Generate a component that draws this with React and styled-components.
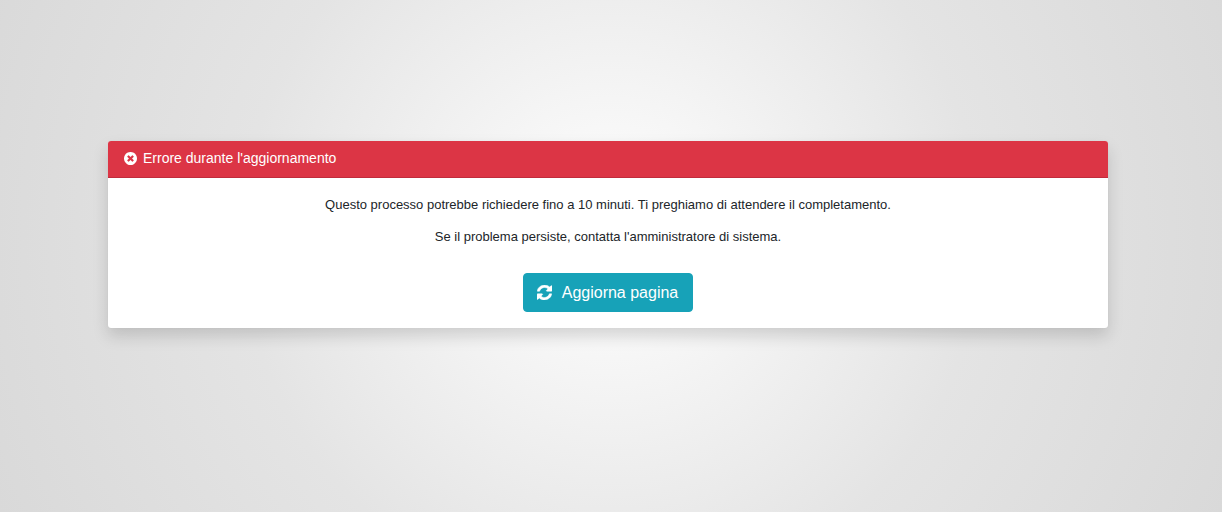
import React from "react";
import styled, { createGlobalStyle } from "styled-components";

const GlobalStyle = createGlobalStyle`
  *, *::before, *::after { box-sizing: border-box; }
  body {
    margin: 0;
    font-family: "Liberation Sans", Arial, sans-serif;
    font-size: 13px;
    line-height: 20px;
    color: #212529;
  }
`;

const Page = styled.main`
  min-height: 100vh;
  padding: 141px 114px 80px 108px;
  background: radial-gradient(circle at 50% 46%, #ffffff 0%, #e4e4e4 55%, #d9d9d9 100%);
`;

const Card = styled.section`
  max-width: 1000px;
  margin: 0 auto;
  background: #fff;
  border-radius: 3px;
  overflow: hidden;
  box-shadow: 0 8px 16px rgba(0, 0, 0, 0.15), 0 0 1px rgba(0, 0, 0, 0.1);
`;

const CardHeader = styled.header`
  display: flex;
  align-items: flex-start;
  gap: 6px;
  padding: 7px 16px 9px;
  background: #dc3545;
  border-bottom: 1px solid #c02c3c;
  color: #fff;
`;

const CardTitle = styled.h1`
  margin: 0;
  font-size: 14px;
  font-weight: 400;
  line-height: 20px;
`;

const CardBody = styled.div`
  padding: 17px 16px 16px;
  text-align: center;
`;

const Message = styled.p`
  margin: 0 0 12px;
`;

const RefreshButton = styled.button`
  display: inline-flex;
  align-items: center;
  gap: 10px;
  margin-top: 14px;
  padding: 7px 14px 7px 13px;
  border: 1px solid #17a2b8;
  border-radius: 4px;
  background: #17a2b8;
  color: #fff;
  font-family: inherit;
  font-size: 16px;
  line-height: 23px;
  cursor: pointer;
`;

const Icon = styled.svg`
  flex: none;
  width: ${(p) => p.$size}px;
  height: ${(p) => p.$size}px;
  fill: currentColor;
`;

const HeaderIcon = styled(Icon)`
  margin-top: 4px;
`;

export default function App() {
  return (
    <>
      <GlobalStyle />
      <Page>
        <Card>
          <CardHeader>
            <HeaderIcon $size={13} viewBox="128 128 1536 1536" aria-hidden="true">
              <path d="M1277 1122q0-26-19-45l-181-181 181-181q19-19 19-45 0-27-19-46l-90-90q-19-19-46-19-26 0-45 19l-181 181-181-181q-19-19-45-19-27 0-46 19l-90 90q-19 19-19 46 0 26 19 45l181 181-181 181q-19 19-19 45 0 27 19 46l90 90q19 19 46 19 26 0 45-19l181-181 181 181q19 19 45 19 27 0 46-19l90-90q19-19 19-46zm387-226q0 209-103 385.5t-279.5 279.5-385.5 103-385.5-103-279.5-279.5-103-385.5 103-385.5 279.5-279.5 385.5-103 385.5 103 279.5 279.5 103 385.5z" />
            </HeaderIcon>
            <CardTitle>Errore durante l'aggiornamento</CardTitle>
          </CardHeader>
          <CardBody>
            <Message>
              Questo processo potrebbe richiedere fino a 10 minuti. Ti preghiamo di attendere il completamento.
            </Message>
            <Message>Se il problema persiste, contatta l'amministratore di sistema.</Message>
            <RefreshButton type="button" onClick={() => window.location.reload()}>
              <Icon $size={15} viewBox="128 128 1536 1536" aria-hidden="true">
                <path
                  stroke="currentColor"
                  strokeWidth="50"
                  d="M1639 1056q0 5-1 7-64 268-268 434.5t-478 166.5q-146 0-282.5-55t-243.5-157l-129 129q-19 19-45 19t-45-19-19-45v-448q0-26 19-45t45-19h448q26 0 45 19t19 45-19 45l-137 137q71 66 161 102t187 36q134 0 250-65t186-179q11-17 53-117 8-23 30-23h192q13 0 22.5 9.5t9.5 22.5zm25-800v448q0 26-19 45t-45 19h-448q-26 0-45-19t-19-45 19-45l138-138q-148-137-349-137-134 0-250 65t-186 179q-11 17-53 117-8 23-30 23h-199q-13 0-22.5-9.5t-9.5-22.5v-7q65-268 270-434.5t480-166.5q146 0 284 55.5t245 156.5l130-129q19-19 45-19t45 19 19 45z"
                />
              </Icon>
              Aggiorna pagina
            </RefreshButton>
          </CardBody>
        </Card>
      </Page>
    </>
  );
}
